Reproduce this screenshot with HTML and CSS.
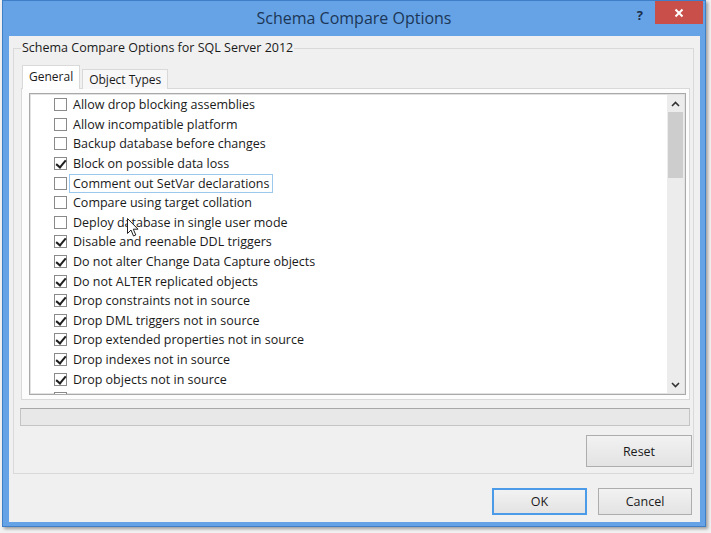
FILE: index.html
```html
<!DOCTYPE html>
<html lang="en">
<head>
	<meta charset="UTF-8">
	<title>Schema Compare Options</title>
	<link rel="stylesheet" href="styles.css">
</head>
<body>
	<div class="window">
		<div class="titlebar">
			<div></div>
			<div class="title">Schema Compare Options</div>
			<div class="controls">
				<span class="help">?</span>
				<span class="close">
					<svg width="10" height="10" viewBox="0 0 10 10"><path d="M1.5 1.5 L8.5 8.5 M8.5 1.5 L1.5 8.5" stroke="#fff" stroke-width="2"/></svg>
				</span>
			</div>
		</div>

		<div class="client">
			<fieldset class="group">
				<legend>Schema Compare Options for SQL Server 2012</legend>

				<div class="tabs">
					<span class="tab active">General</span>
					<span class="tab">Object Types</span>
				</div>

				<div class="panel">
					<div class="list">
						<div class="rows">
							<div class="row"><span class="box"></span><span class="label">Allow drop blocking assemblies</span></div>
							<div class="row"><span class="box"></span><span class="label">Allow incompatible platform</span></div>
							<div class="row"><span class="box"></span><span class="label">Backup database before changes</span></div>
							<div class="row checked"><span class="box"></span><span class="label">Block on possible data loss</span></div>
							<div class="row focus"><span class="box"></span><span class="label">Comment out SetVar declarations</span></div>
							<div class="row"><span class="box"></span><span class="label">Compare using target collation</span></div>
							<div class="row"><span class="box"></span><span class="label">Deploy database in single user mode</span></div>
							<div class="row checked"><span class="box"></span><span class="label">Disable and reenable DDL triggers</span></div>
							<div class="row checked"><span class="box"></span><span class="label">Do not alter Change Data Capture objects</span></div>
							<div class="row checked"><span class="box"></span><span class="label">Do not ALTER replicated objects</span></div>
							<div class="row checked"><span class="box"></span><span class="label">Drop constraints not in source</span></div>
							<div class="row checked"><span class="box"></span><span class="label">Drop DML triggers not in source</span></div>
							<div class="row checked"><span class="box"></span><span class="label">Drop extended properties not in source</span></div>
							<div class="row checked"><span class="box"></span><span class="label">Drop indexes not in source</span></div>
							<div class="row checked"><span class="box"></span><span class="label">Drop objects not in source</span></div>
							<div class="row checked"><span class="box"></span></div>
						</div>
						<div class="scrollbar">
							<span class="arrow">
								<svg width="9" height="6" viewBox="0 0 9 6"><path d="M1 5 L4.5 1.5 L8 5" fill="none" stroke="#333" stroke-width="1.6"/></svg>
							</span>
							<span class="thumb"></span>
							<span class="track"></span>
							<span class="arrow">
								<svg width="9" height="6" viewBox="0 0 9 6"><path d="M1 1 L4.5 4.5 L8 1" fill="none" stroke="#333" stroke-width="1.6"/></svg>
							</span>
						</div>
					</div>
				</div>

				<div class="status"></div>

				<div class="reset-row">
					<button class="btn reset">Reset</button>
				</div>
			</fieldset>

			<div class="footer">
				<button class="btn default">OK</button>
				<button class="btn">Cancel</button>
			</div>
		</div>
	</div>

	<!-- mouse pointer over the list -->
	<svg class="cursor" width="13" height="20" viewBox="0 0 13 20">
		<path d="M0.5 0.5 L0.5 15.5 L4 12 L6.5 18 L8.8 17 L6.3 11.2 L11 11.2 Z" fill="#fff" stroke="#222" stroke-width="1"/>
	</svg>
</body>
</html>
```

FILE: styles.css
```css
*{
	margin:0;
	padding:0;
	box-sizing:border-box;
}
body{
	background:#f2f2f2;
	font-family:"Open Sans","Noto Sans",sans-serif;
	font-size:12px;
	color:#1a1a1a;
	width:711px;
	height:533px;
	overflow:hidden;
}
.window{
	margin-left:2px;
	width:704px;
	height:527px;
	background:#66a3e6;
	border:1px solid #3f7fc8;
	box-shadow:2px 2px 3px rgba(0,0,0,.35);
	display:flex;
	flex-direction:column;
}
.titlebar{
	height:35px;
	display:grid;
	grid-template-columns:1fr auto 1fr;
}
.title{
	font-size:16px;
	color:#1b3656;
	line-height:35px;
}
.controls{
	display:flex;
	justify-content:flex-end;
	align-items:flex-start;
}
.help{
	font-weight:bold;
	font-size:13px;
	color:#1b2f4a;
	margin:5px 12px 0 0;
}
.close{
	width:48px;
	height:23px;
	background:#c9504a;
	display:flex;
	align-items:center;
	justify-content:center;
	margin-right:2px;
}
.client{
	flex:1;
	margin:0 5px 4px 6px;
	background:#f0f0f0;
	display:flex;
	flex-direction:column;
}
.group{
	margin:4px 6px 0 4px;
	border:1px solid #d9d9d9;
	padding:9px 3px 6px 7px;
	display:flex;
	flex-direction:column;
}
.group legend{
	margin-left:0;
	padding:0 1px;
	font-size:12.5px;
	line-height:16px;
}
.tabs{
	display:flex;
	align-items:flex-end;
	height:24px;
	margin-bottom:-1px;
	position:relative;
	z-index:1;
}
.tab{
	height:20px;
	padding:0 6px;
	margin-left:2px;
	border:1px solid #d9d9d9;
	border-bottom:none;
	background:#f7f7f7;
	line-height:19px;
}
.tab.active{
	height:24px;
	margin-left:1px;
	background:#fff;
	line-height:21px;
	padding:0 6px;
}
.panel{
	height:312px;
	border:1px solid #d9d9d9;
	background:#fcfcfc;
	padding:4px 3px 4px 7px;
	display:flex;
}
.list{
	flex:1;
	border:1px solid #a9a9a9;
	box-shadow:inset 0 0 0 1px #e2e2e2;
	background:#fff;
	display:flex;
	overflow:hidden;
}
.rows{
	flex:1;
	padding:1px 0 0 24px;
	overflow:hidden;
}
.row{
	height:19.6px;
	display:flex;
	align-items:center;
	font-size:12.5px;
}
.box{
	width:13px;
	height:13px;
	border:1px solid #8a8a8a;
	background:#fff;
	flex-shrink:0;
	position:relative;
}
.checked .box::after{
	content:"";
	position:absolute;
	left:3px;
	top:0px;
	width:4px;
	height:8px;
	border:solid #1e1e1e;
	border-width:0 2px 2px 0;
	transform:rotate(40deg);
}
.label{
	margin-left:2px;
	padding:0 3px;
	border:1px solid transparent;
	line-height:17px;
	white-space:nowrap;
}
.focus .label{
	border-color:#9cc8ee;
}
.scrollbar{
	width:17px;
	margin:1px 1px 1px 0;
	background:#ececec;
	display:flex;
	flex-direction:column;
}
.arrow{
	height:17px;
	display:flex;
	align-items:center;
	justify-content:center;
	flex-shrink:0;
}
.thumb{
	height:66px;
	margin:0 1px;
	background:#cdcdcd;
}
.track{
	flex:1;
}
.status{
	height:18px;
	margin:8px 0 0 -1px;
	border:1px solid #c4c4c4;
	border-top-color:#a8a8a8;
	background:#e8e8e8;
}
.reset-row{
	display:flex;
	justify-content:flex-end;
	margin:9px -2px 0 0;
}
.btn{
	font-family:inherit;
	font-size:12.5px;
	color:#1a1a1a;
	background:linear-gradient(#f2f2f2,#e3e3e3);
	border:1px solid #adadad;
	width:94px;
	height:27px;
}
.reset{
	width:106px;
	height:32px;
}
.footer{
	display:flex;
	justify-content:flex-end;
	gap:11px;
	margin:14px 8px 0 0;
}
.default{
	width:95px;
	border:2px solid #4c9be8;
}
.cursor{
	position:absolute;
	left:127px;
	top:218px;
}
```
